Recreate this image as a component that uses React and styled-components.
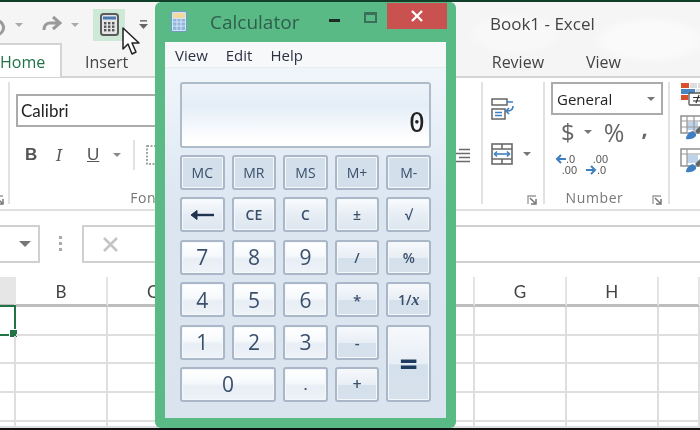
import React from "react";
import styled, { createGlobalStyle } from "styled-components";

const Global = createGlobalStyle`
  html, body { margin: 0; padding: 0; background: #fff; }
  body { width: 700px; height: 430px; overflow: hidden; font-family: "Open Sans", "Noto Sans", sans-serif; }
`;
const Page = styled.div`
  position: relative; width: 700px; height: 430px; overflow: hidden; background: #fff;
  filter: blur(0.45px);
  display: flex; flex-direction: column;
`;
const TopEdge = styled.div`height: 2px; flex: none; background: #123f2a;`;
const Chrome = styled.div`
  flex: none; height: 76px; display: flex; flex-direction: column;
  background:
    radial-gradient(ellipse 50px 22px at 515px 32px, #f8f8f8 70%, transparent 100%),
    radial-gradient(ellipse 60px 24px at 650px 38px, #fafafa 70%, transparent 100%),
    #f5f5f5;
`;
const TitleRow = styled.div`height: 41px; flex: none; display: flex; align-items: center; overflow: hidden;`;
const Qat = styled.div`display: flex; align-items: center; height: 32px; margin-top: 4px;`;
const Highlight = styled.div`
  width: 32px; height: 32px; display: flex; align-items: center; justify-content: center;
  background: #cfe9d9; margin-left: 14px;
`;
const Caret = styled.span`
  display: inline-block; flex: none; width: 0; height: 0;
  border-left: 4px solid transparent; border-right: 4px solid transparent; border-top: 4px solid ${p => p.$c || "#8b8b8b"};
  margin-left: ${p => p.$ml || 0}px;
`;
const BookTitle = styled.div`margin-left: auto; width: 210px; font-size: 17px; color: #444; margin-top: 2px;`;
const TabRow = styled.div`flex: none; display: flex; align-items: stretch; border-bottom: 2px solid #d4d4d4; box-sizing: content-box; height: 33px;`;
const HomeTab = styled.div`
  width: 62px; height: 34px; margin-bottom: -2px; box-sizing: border-box; background: #fff;
  border-top: 2px solid #d4d4d4; border-right: 2px solid #d4d4d4;
  color: #217346; font-size: 16px; line-height: 35px; overflow: hidden; padding-left: 0;
`;
const Tab = styled.div`font-size: 16px; color: #444; line-height: 39px; margin-left: ${p => p.$ml || 0}px;`;
const TabEnd = styled.div`margin-left: auto; display: flex; padding-right: 79px;`;

const Ribbon = styled.div`height: 131px; flex: none; display: flex; background: #fff; border-bottom: 2px solid #e0e0e0;`;
const Group = styled.div`
  box-sizing: border-box; width: ${p => p.$w}px; flex: none; position: relative; height: 122px; margin-top: 4px;
  border-right: 2px solid #e2e2e2; display: flex; flex-direction: column;
`;
const GroupLabel = styled.div`
  margin-top: auto; margin-bottom: -3px; text-align: center; font-size: 14px; color: #777; line-height: 18px; letter-spacing: .6px;
  padding-right: ${p => p.$pr || 0}px;
`;
const Launcher = styled.svg`position: absolute; right: ${p => p.$r}px; bottom: -1px;`;
const FontBox = styled.div`
  box-sizing: border-box; margin: 12px 0 0 6px; width: 180px; height: 33px; border: 2px solid #ababab;
  font-family: Lato, "Open Sans", sans-serif; font-size: 17px; color: #222; line-height: 29px; padding-left: 3px;
`;
const FontRow = styled.div`display: flex; align-items: center; margin: 17px 0 0 15px; height: 22px;`;
const Style = styled.span`
  font-family: ${p => p.$i ? '"DejaVu Serif", serif' : '"Liberation Sans", sans-serif'}; font-size: ${p => p.$i ? 16 : 17}px; color: #555; width: 31px;
  font-weight: ${p => p.$b ? 700 : 400}; font-style: ${p => p.$i ? "italic" : "normal"};
  text-decoration: ${p => p.$u ? "underline" : "none"};
`;
const UStyle = styled(Style)`width: auto;`;
const Sep = styled.span`width: 2px; height: 30px; background: #e2e2e2; margin: 0 11px 0 12px;`;
const AlignRow = styled.div`display: flex; justify-content: flex-end; margin-top: 66px; padding-right: 11px;`;
const WrapCol = styled.div`display: flex; flex-direction: column; gap: 23px; padding: 16px 0 0 8px; align-items: flex-start;`;
const MergeRow = styled.div`display: flex; align-items: center;`;
const GeneralBox = styled.div`
  box-sizing: border-box; flex: none; width: 112px; height: 33px; margin-left: 6px; border: 2px solid #ababab;
  display: flex; align-items: center; justify-content: space-between; padding: 0 6px 0 4px;
  font-family: "Open Sans", sans-serif; font-size: 15px; color: #222;
`;
const MoneyRow = styled.div`display: flex; align-items: center; margin: 0 0 0 16px; height: 34px; color: #666; font-family: "Open Sans", sans-serif;`;
const Money = styled.span`font-size: ${p => p.$s}px; margin-left: ${p => p.$ml || 0}px; line-height: 30px;`;
const Comma = styled(Money)`font-weight: 700; margin-top: -10px;`;
const DecRow = styled.div`display: flex; gap: 9px; margin: 5px 0 0 10px;`;
const DecBlock = styled.div`
  display: grid; grid-template-columns: 11px 11px; font-family: "Liberation Sans", sans-serif;
  font-size: 11px; line-height: 11px; color: #555; width: 22px;
`;
const DecCell = styled.span`text-align: ${p => p.$a || "left"}; grid-column: ${p => p.$col || "auto"}; white-space: nowrap;`;
const StyleIcons = styled.div`display: flex; flex-direction: column; gap: 8px; padding: 4px 0 0 10px; overflow: hidden;`;

const FormulaBar = styled.div`height: 66px; flex: none; display: flex; align-items: flex-start; background: #fff; padding-top: 14px; box-sizing: border-box;`;
const NameBox = styled.div`
  box-sizing: border-box; width: 40px; height: 38px; border: 2px solid #d0d0d0; border-left: 0;
  display: flex; align-items: center; justify-content: flex-end; padding-right: 7px;
`;
const NameCaret = styled(Caret)`border-left-width: 6px; border-right-width: 6px; border-top-width: 6px;`;
const Dots = styled.div`width: 3px; margin: 11px 20px 0 19px; display: flex; flex-direction: column; gap: 3px;`;
const Dot = styled.i`display: block; width: 3px; height: 3px; background: #aaa;`;
const FormulaInput = styled.div`
  box-sizing: border-box; flex: 1; height: 38px; border: 2px solid #d0d0d0; border-right: 0;
  display: flex; align-items: center; padding-left: 18px;
`;

const Sheet = styled.div`
  flex: 1; display: grid; grid-template-columns: 16px repeat(7, 91.8px) 1fr;
  grid-template-rows: 30px repeat(3, 28.6px) 29px 1fr; background: #fff; border-bottom: 2px solid #111;
`;
const ColHead = styled.div`
  box-sizing: border-box; border-bottom: 3px solid #bdbdbd; border-right: 2px solid ${p => p.$sel ? "transparent" : "#e4e4e4"};
  background: ${p => p.$sel ? "#e6e6e6" : "#fff"}; text-align: center; font-family: Lato, sans-serif; font-size: 17px; color: #444; line-height: 29px;
`;
const Cell = styled.div`
  position: relative; box-sizing: border-box; border-right: 2px solid #dedede; border-bottom: 2px solid #dedede;
`;
const Selected = styled.div`
  position: absolute; left: -2px; right: -2px; top: -2px; bottom: -2px; border: 2px solid #217346; border-left: 0;
`;
const Handle = styled.div`position: absolute; right: -4px; bottom: -4px; width: 7px; height: 7px; background: #217346; border: 1px solid #fff;`;

const Calc = styled.div`
  position: absolute; left: 155px; top: 2px; width: 301px; height: 426px; box-sizing: border-box;
  background: #59ba86; border-radius: 6px; padding: 0 10px 10px; display: flex; flex-direction: column;
`;
const CalcTitle = styled.div`height: 40px; flex: none; display: flex; align-items: flex-start;`;
const CalcName = styled.div`font-size: 19px; color: #2f5f4c; margin: 7px 0 0 23px; line-height: 26px; width: 119px;`;
const Min = styled.div`width: 11px; height: 3px; background: #1b2b24; margin-top: 17px;`;
const Max = styled.div`box-sizing: border-box; width: 13px; height: 11px; border: 2px solid #3c6f59; border-top-width: 3px; margin: 10px 0 0 24px;`;
const Close = styled.div`
  width: 60px; height: 26px; background: #c9514f; color: #fff; margin: 1px -1px 0 10px; display: flex; align-items: center; justify-content: center;
`;
const CalcBody = styled.div`
  flex: 1; display: flex; flex-direction: column; background: linear-gradient(#f4f8fc, #dbe6f1 45%, #d9e4ef);
`;
const Menu = styled.div`
  box-sizing: border-box; height: 26px; flex: none; display: flex; gap: 18px; align-items: center; padding-left: 10px;
  background: #f7f8fa; font-size: 15px; color: #2e3044; border-bottom: 1px solid #e8edf2;
`;
const CalcPad = styled.div`padding: 14px 15px 0;`;
const Display = styled.div`
  box-sizing: border-box; height: 66px; border: 2px solid #aebbc9; border-radius: 3px;
  background: linear-gradient(#eef3fa, #e4edf7 35%, #fff 90%);
  display: flex; align-items: flex-end; justify-content: flex-end; padding: 0 4px 8px 0;
  font-family: "DejaVu Sans Mono", monospace; font-size: 27px; line-height: 30px; color: #222;
`;
const Keys = styled.div`
  display: grid; grid-template-columns: repeat(5, 1fr); grid-auto-rows: 35px; gap: 7.4px 7px; margin-top: 7px;
`;
const bgs = {
  mem: "#d3dfeb",
  ctl: "linear-gradient(#fafcfe, #e6edf4 50%, #dde6ef)",
  dig: "linear-gradient(#ffffff, #f6f9fc 45%, #e8eef5 55%, #eef3f8)",
  op: "linear-gradient(#f7f9fc, #e8eef5 50%, #d4e0eb 52%, #d6e1ec)",
};
const Key = styled.div`
  box-sizing: border-box; border: 2px solid #a9b7c8; border-radius: 3px;
  box-shadow: inset 0 0 0 1px #f4f8fb;
  background: ${p => bgs[p.$k]};
  grid-column: span ${p => p.$cs || 1}; grid-row: span ${p => p.$rs || 1};
  display: flex; align-items: center; justify-content: center;
  font-size: ${p => p.$s || 14}px; color: ${p => p.$c || "#3a4f6c"};
  font-family: "Open Sans", sans-serif;
  font-weight: ${p => p.$w || 400};
`;
const SerifX = styled.i`font-family: "Liberation Serif", serif; font-size: 16px; font-weight: 700;`;
const Pointer = styled.svg`position: absolute; left: 121px; top: 27px;`;

const UndoIcon = () => (
  <svg width="20" height="22" viewBox="0 0 20 22" style={{ marginLeft: -13 }} fill="none">
    <path d="M2 5v6h6M3 11a7 7 0 1 1 2 8" stroke="#9a9a9a" strokeWidth="3" />
  </svg>
);
const RedoIcon = () => (
  <svg width="20" height="20" viewBox="0 0 20 20" style={{ marginLeft: 19 }} fill="none">
    <path d="M11 2l7 6-7 6M18 8H8c-4 0-6 3-6 7" stroke="#9a9a9a" strokeWidth="3" />
  </svg>
);
const CalcIcon = () => (
  <svg width="19" height="23" viewBox="0 0 19 23">
    <rect x="1" y="1" width="17" height="21" rx="2.5" fill="#e4e4e4" stroke="#5b5b5b" strokeWidth="2" />
    <rect x="3" y="3.5" width="13" height="3" fill="#4a78b5" />
    {[9, 12.5, 16].map(y => [4, 8, 12].map(x => <rect key={x + "-" + y} x={x} y={y} width="2.4" height="2.4" fill="#555" />))}
  </svg>
);
const Customize = () => (
  <svg width="9" height="11" viewBox="0 0 9 11" style={{ marginLeft: 14 }}>
    <rect x="1" y="1" width="7" height="1.6" fill="#777" /><path d="M0 5h9L4.500 10z" fill="#666" />
  </svg>
);
const LauncherIcon = ({ r }) => (
  <Launcher $r={r} width="10" height="10" viewBox="0 0 10 10" fill="none">
    <path d="M9 1H1v8" stroke="#999" strokeWidth="1.300" /><path d="M3 3l5 5M9 4v5H4" stroke="#777" strokeWidth="1.500" />
  </Launcher>
);
const Lines = () => (
  <svg width="14" height="15" viewBox="0 0 14 15" fill="none" stroke="#6b6b6b" strokeWidth="1.500">
    <path d="M3 1.500h11M0 5.500h14M3 9.500h11M0 13.500h14" />
  </svg>
);
const WrapIcon = () => (
  <svg width="24" height="22" viewBox="0 0 24 22" fill="none">
    <rect x="1" y="1" width="15" height="6" stroke="#666" strokeWidth="1.500" />
    <path d="M16 4h6" stroke="#3f7fbf" strokeWidth="1.500" />
    <rect x="1" y="11" width="13" height="10" stroke="#666" strokeWidth="1.500" />
    <path d="M4 14.500h7M4 17.500h7" stroke="#3f7fbf" strokeWidth="1.300" />
    <path d="M22 8c0 4-3 5-6 5m2-3l-3 3 3 3" stroke="#3f7fbf" strokeWidth="1.600" />
  </svg>
);
const MergeIcon = () => (
  <svg width="22" height="22" viewBox="0 0 22 22" fill="none" stroke="#6a6a6a" strokeWidth="1.600">
    <rect x="1" y="1" width="20" height="20" />
    <path d="M1 6h20M1 16h20M11 1v5M11 16v5" />
    <path d="M4 11h14" stroke="#3f7fbf" /><path d="M6 8.500L3.500 11 6 13.500M16 8.500l2.500 2.500L16 13.500" stroke="#3f7fbf" />
  </svg>
);
const ArrowL = () => (
  <svg width="11" height="10" viewBox="0 0 11 10" fill="none" stroke="#3f7fbf" strokeWidth="2"><path d="M11 5H2M6 1L2 5l4 4" /></svg>
);
const ArrowR = () => (
  <svg width="11" height="10" viewBox="0 0 11 10" fill="none" stroke="#3f7fbf" strokeWidth="2"><path d="M0 5h9M5 1l4 4-4 4" /></svg>
);
const BackArrow = () => (
  <svg width="24" height="12" viewBox="0 0 24 12" fill="none" stroke="#1f3350">
    <path d="M3 6h21" strokeWidth="2.400" /><path d="M7 1.500L1 6l6 4.500z" fill="#1f3350" strokeWidth="1" />
  </svg>
);
const CondIcon = () => (
  <svg width="30" height="25" viewBox="0 0 30 25">
    <rect x="1" y="1" width="8" height="5" fill="#d9512c" /><rect x="10" y="1" width="7" height="5" fill="#ddd" /><rect x="18" y="1" width="7" height="5" fill="#ddd" />
    <rect x="1" y="7" width="14" height="5" fill="#4a86c5" /><rect x="16" y="7" width="9" height="4" fill="#ddd" />
    <rect x="1" y="13" width="7" height="5" fill="#d9512c" />
    <rect x="9" y="11" width="19" height="12" rx="1" fill="#fff" stroke="#555" strokeWidth="1.300" />
    <path d="M13 15.500h9M13 19h9M19 13l-3 8" stroke="#333" strokeWidth="1.200" />
  </svg>
);
const TableIcon = ({ soft }) => (
  <svg width="30" height="25" viewBox="0 0 30 25" fill="none">
    <rect x="1" y="1" width="21" height="17" stroke="#888" strokeWidth="1.400" fill="#fff" />
    <rect x="7" y="7" width="11" height="8" fill="#bcd3ea" />
    <path d={soft ? "M1 6h21M7 1v17" : "M1 6h21M1 12h21M7 1v17M14 1v17"} stroke="#999" strokeWidth="1.200" />
    <path d="M6 24c0-4 3-7 7-8l3 3c1 3-4 6-10 5z" fill="#3f7fbf" />
    <path d="M15 16l6-6 3 2-6 7z" fill="#666" />
  </svg>
);

const columns = ["", "B", "C", "", "", "", "G", "H", ""];
const m = { s: 14 };
const d = { s: 21 };
const keyRows = [
  ["MC", "mem", m, "MC"], ["MR", "mem", m, "MR"], ["MS", "mem", m, "MS"], ["M+", "mem", m, "M+"], ["M-", "mem", m, "M-"],
  ["back", "ctl", {}, <BackArrow />], ["CE", "ctl", { s: 14, w: 600 }, "CE"], ["C", "ctl", { s: 14, w: 600 }, "C"], ["±", "ctl", { s: 14, w: 600 }, "±"], ["√", "ctl", { s: 14, w: 600 }, "√"],
  ["7", "dig", d, "7"], ["8", "dig", d, "8"], ["9", "dig", d, "9"], ["/", "op", { s: 14, w: 600 }, "/"], ["%", "op", { s: 14, w: 600 }, "%"],
  ["4", "dig", d, "4"], ["5", "dig", d, "5"], ["6", "dig", d, "6"], ["*", "op", { s: 15, w: 600 }, "*"], ["1/x", "op", { s: 14, w: 600 }, <>1/<SerifX>x</SerifX></>],
  ["1", "dig", d, "1"], ["2", "dig", d, "2"], ["3", "dig", d, "3"], ["-", "op", { s: 15, w: 600 }, "-"], ["=", "op", { s: 32, rs: 2, c: "#1f3a5f", w: 700 }, "="],
  ["0", "dig", { s: 21, cs: 2 }, "0"], [".", "dig", { s: 15, w: 600 }, "."], ["+", "op", { s: 16, w: 600 }, "+"],
];

export default function App() {
  return (
    <>
      <Global />
      <Page>
        <TopEdge />
        <Chrome>
          <TitleRow>
            <Qat>
              <UndoIcon />
              <Caret $ml={8} $c="#aaa" />
              <RedoIcon />
              <Caret $ml={9} $c="#aaa" />
              <Highlight><CalcIcon /></Highlight>
              <Customize />
            </Qat>
            <BookTitle>Book1 - Excel</BookTitle>
          </TitleRow>
          <TabRow>
            <HomeTab>Home</HomeTab>
            <Tab $ml={23}>Insert</Tab>
            <TabEnd>
              <Tab>Review</Tab>
              <Tab $ml={42}>View</Tab>
            </TabEnd>
          </TabRow>
        </Chrome>
        <Ribbon>
          <Group $w={10}><LauncherIcon r={4} /></Group>
          <Group $w={274}>
            <FontBox>Calibri</FontBox>
            <FontRow>
              <Style $b>B</Style>
              <Style $i>I</Style>
              <UStyle $u>U</UStyle>
              <Caret $ml={14} />
              <Sep />
              <svg width="10" height="20" viewBox="0 0 10 20" fill="none" stroke="#888" strokeWidth="1.500" strokeDasharray="2 1.500"><rect x="1" y="1" width="14" height="18" /></svg>
            </FontRow>
            <GroupLabel>Font</GroupLabel>
          </Group>
          <Group $w={199}>
            <AlignRow><Lines /></AlignRow>
          </Group>
          <Group $w={62}>
            <WrapCol>
              <WrapIcon />
              <MergeRow><MergeIcon /><Caret $ml={10} $c="#777" /></MergeRow>
            </WrapCol>
            <LauncherIcon r={6} />
          </Group>
          <Group $w={125}>
            <GeneralBox>General<Caret $c="#777" /></GeneralBox>
            <MoneyRow>
              <Money $s={24}>$</Money>
              <Caret $ml={9} $c="#777" />
              <Money $s={25} $ml={12}>%</Money>
              <Comma $s={22} $ml={17}>,</Comma>
            </MoneyRow>
            <DecRow>
              <DecBlock>
                <ArrowL /><DecCell>.0</DecCell>
                <DecCell $col="1 / 3" $a="right">.00</DecCell>
              </DecBlock>
              <DecBlock>
                <DecCell $col="1 / 3" $a="right">.00</DecCell>
                <ArrowR /><DecCell>.0</DecCell>
              </DecBlock>
            </DecRow>
            <GroupLabel $pr={24}>Number</GroupLabel>
            <LauncherIcon r={6} />
          </Group>
          <StyleIcons>
            <CondIcon /><TableIcon /><TableIcon soft />
          </StyleIcons>
        </Ribbon>
        <FormulaBar>
          <NameBox><NameCaret $c="#777" /></NameBox>
          <Dots><Dot /><Dot /><Dot /></Dots>
          <FormulaInput>
            <svg width="17" height="17" viewBox="0 0 17 17" stroke="#c4c4c4" strokeWidth="2.500"><path d="M2 2l13 13M15 2L2 15" /></svg>
          </FormulaInput>
        </FormulaBar>
        <Sheet>
          {columns.map((c, i) => <ColHead key={i} $sel={i === 0}>{c}</ColHead>)}
          {[0, 1, 2, 3, 4].flatMap(r => columns.map((c, i) => (
            <Cell key={r + "-" + i}>
              {r === 0 && i === 0 && <Selected><Handle /></Selected>}
            </Cell>
          )))}
        </Sheet>
        <Calc>
          <CalcTitle>
            <svg width="16" height="21" viewBox="0 0 16 21" style={{ marginTop: 9, marginLeft: 6, flex: "none" }}>
              <rect x="0.500" y="0.500" width="15" height="20" rx="1.500" fill="#d5e4f2" stroke="#6f9cc6" />
              <rect x="2" y="2" width="12" height="5" fill="#f2d9a0" />
              <rect x="2" y="8" width="12" height="11" fill="#8fb6dc" />
              <path d="M2 11h12M2 15h12M6 8v11M10 8v11" stroke="#e5eef7" strokeWidth="0.800" />
            </svg>
            <CalcName>Calculator</CalcName>
            <Min />
            <Max />
            <Close>
              <svg width="12" height="12" viewBox="0 0 12 12" stroke="#fff" strokeWidth="2.400"><path d="M1 1l10 10M11 1L1 11" /></svg>
            </Close>
          </CalcTitle>
          <CalcBody>
            <Menu><span>View</span><span>Edit</span><span>Help</span></Menu>
            <CalcPad>
              <Display>0</Display>
              <Keys>
                {keyRows.map(([id, k, o, label]) => (
                  <Key key={id} $k={k} $s={o.s} $c={o.c} $w={o.w} $cs={o.cs} $rs={o.rs}>{label}</Key>
                ))}
              </Keys>
            </CalcPad>
          </CalcBody>
        </Calc>
        <Pointer width="20" height="29" viewBox="0 0 20 29">
          <path d="M2 1v21l5-5 4 10 4-2-4-9h7z" fill="#fff" stroke="#222" strokeWidth="1.500" strokeLinejoin="round" />
        </Pointer>
      </Page>
    </>
  );
}
